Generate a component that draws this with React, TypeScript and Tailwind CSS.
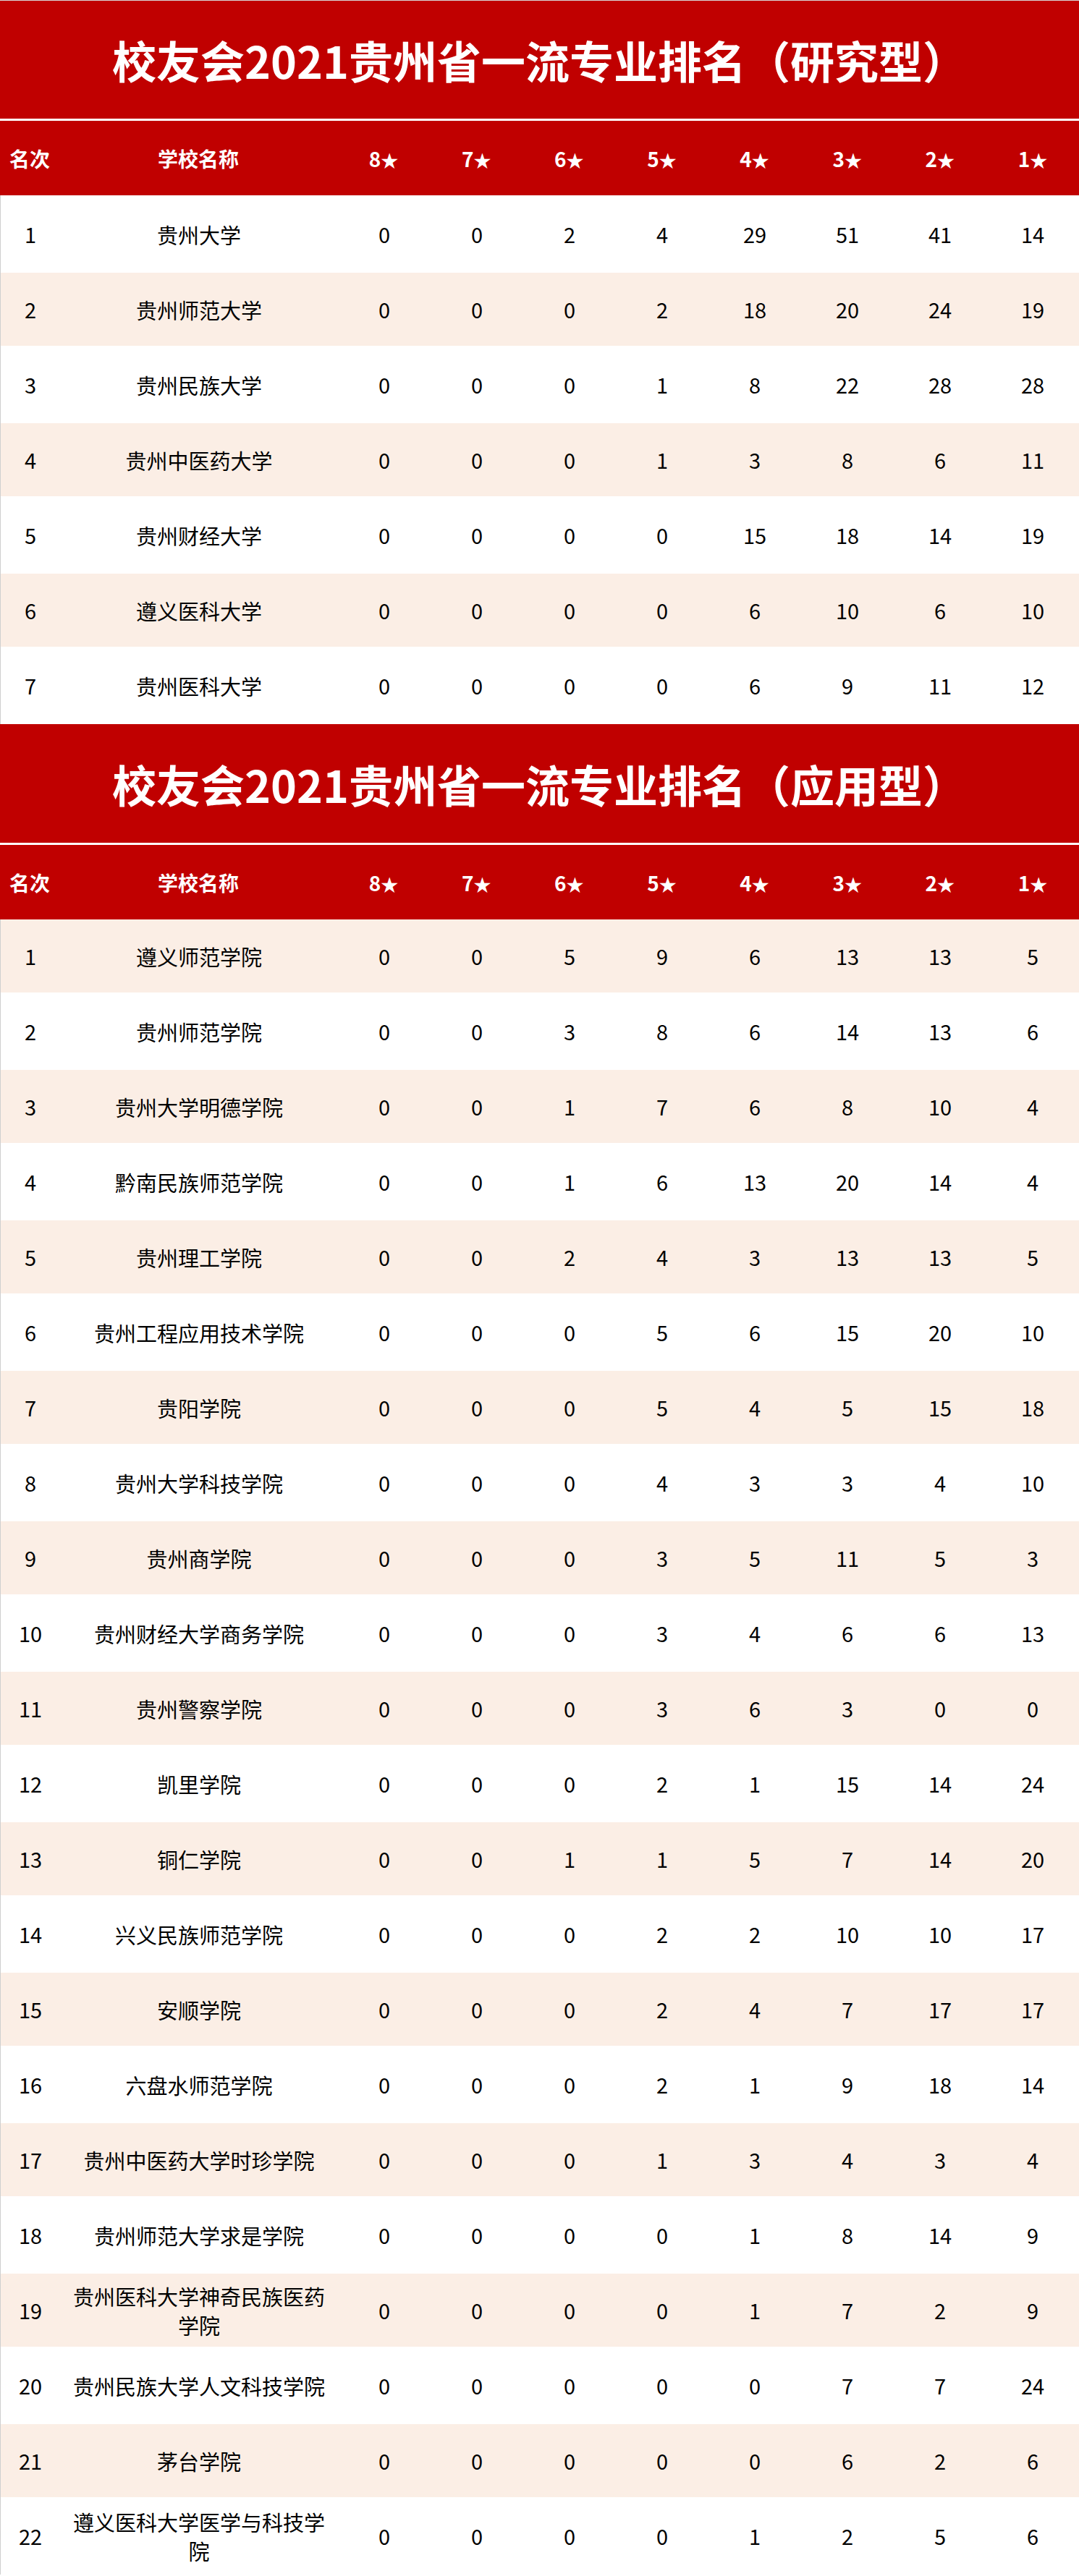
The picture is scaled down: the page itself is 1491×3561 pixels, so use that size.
const FONT = "font-['Noto_Sans_CJK_SC','Noto_Sans',sans-serif]";

type Row = [number, string, ...number[]];

const research: Row[] = [
  [1, '贵州大学', 0, 0, 2, 4, 29, 51, 41, 14],
  [2, '贵州师范大学', 0, 0, 0, 2, 18, 20, 24, 19],
  [3, '贵州民族大学', 0, 0, 0, 1, 8, 22, 28, 28],
  [4, '贵州中医药大学', 0, 0, 0, 1, 3, 8, 6, 11],
  [5, '贵州财经大学', 0, 0, 0, 0, 15, 18, 14, 19],
  [6, '遵义医科大学', 0, 0, 0, 0, 6, 10, 6, 10],
  [7, '贵州医科大学', 0, 0, 0, 0, 6, 9, 11, 12],
];

const applied: Row[] = [
  [1, '遵义师范学院', 0, 0, 5, 9, 6, 13, 13, 5],
  [2, '贵州师范学院', 0, 0, 3, 8, 6, 14, 13, 6],
  [3, '贵州大学明德学院', 0, 0, 1, 7, 6, 8, 10, 4],
  [4, '黔南民族师范学院', 0, 0, 1, 6, 13, 20, 14, 4],
  [5, '贵州理工学院', 0, 0, 2, 4, 3, 13, 13, 5],
  [6, '贵州工程应用技术学院', 0, 0, 0, 5, 6, 15, 20, 10],
  [7, '贵阳学院', 0, 0, 0, 5, 4, 5, 15, 18],
  [8, '贵州大学科技学院', 0, 0, 0, 4, 3, 3, 4, 10],
  [9, '贵州商学院', 0, 0, 0, 3, 5, 11, 5, 3],
  [10, '贵州财经大学商务学院', 0, 0, 0, 3, 4, 6, 6, 13],
  [11, '贵州警察学院', 0, 0, 0, 3, 6, 3, 0, 0],
  [12, '凯里学院', 0, 0, 0, 2, 1, 15, 14, 24],
  [13, '铜仁学院', 0, 0, 1, 1, 5, 7, 14, 20],
  [14, '兴义民族师范学院', 0, 0, 0, 2, 2, 10, 10, 17],
  [15, '安顺学院', 0, 0, 0, 2, 4, 7, 17, 17],
  [16, '六盘水师范学院', 0, 0, 0, 2, 1, 9, 18, 14],
  [17, '贵州中医药大学时珍学院', 0, 0, 0, 1, 3, 4, 3, 4],
  [18, '贵州师范大学求是学院', 0, 0, 0, 0, 1, 8, 14, 9],
  [19, '贵州医科大学神奇民族医药学院', 0, 0, 0, 0, 1, 7, 2, 9],
  [20, '贵州民族大学人文科技学院', 0, 0, 0, 0, 0, 7, 7, 24],
  [21, '茅台学院', 0, 0, 0, 0, 0, 6, 2, 6],
  [22, '遵义医科大学医学与科技学院', 0, 0, 0, 0, 1, 2, 5, 6],
];

const stars = ['8', '7', '6', '5', '4', '3', '2', '1'];

const cols = 'grid grid-cols-[82px_384px_repeat(8,minmax(0,1fr))]';

function Section({
  title,
  rows,
  peachOdd,
  first,
}: {
  title: string;
  rows: Row[];
  peachOdd: boolean;
  first?: boolean;
}) {
  return (
    <section>
      <div
        className={`flex h-[164px] items-center justify-center bg-[#c00000] ${
          first ? 'border-t border-[#d8d8d8]' : ''
        }`}
      >
        <h1 className="text-[61px] font-bold leading-none text-white">{title}</h1>
      </div>
      <div className="h-[3px] bg-white" />
      <div className={`${cols} h-[103px] items-center bg-[#c00000] text-[28px] font-bold text-white`}>
        <div className="text-center">名次</div>
        <div className="text-center">学校名称</div>
        {stars.map((s) => (
          <div key={s} className="text-center">
            {s}
            <span className="text-[24px]">★</span>
          </div>
        ))}
      </div>
      {rows.map((r, i) => {
        const peach = peachOdd ? i % 2 === 0 : i % 2 === 1;
        const [rank, name, ...nums] = r;
        return (
          <div
            key={rank}
            className={`${cols} items-center border-l border-[#cfcfcf] text-[29px] text-black ${
              peach ? 'h-[101px] bg-[#fbeee5]' : 'h-[107px] bg-white'
            }`}
          >
            <div className="text-center">{rank}</div>
            <div className="px-3 text-center leading-[40px]">{name}</div>
            {nums.map((n, j) => (
              <div key={j} className="text-center">
                {n}
              </div>
            ))}
          </div>
        );
      })}
    </section>
  );
}

export default function App() {
  return (
    <div className={`w-[1491px] bg-white ${FONT}`}>
      <Section title="校友会2021贵州省一流专业排名（研究型）" rows={research} peachOdd={false} first />
      <Section title="校友会2021贵州省一流专业排名（应用型）" rows={applied} peachOdd />
    </div>
  );
}
